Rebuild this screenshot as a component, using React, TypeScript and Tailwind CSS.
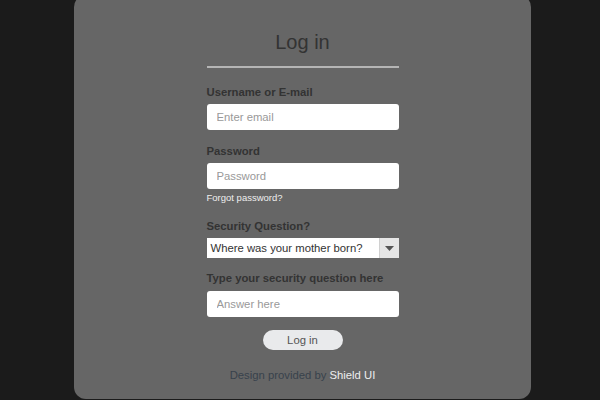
import React from "react";

const font = { fontFamily: '"Liberation Sans", Arial, sans-serif' };

function Label({ children, className = "" }: { children: React.ReactNode; className?: string }) {
  return (
    <div className={`text-[11.3px] leading-[13px] font-bold text-[#333] ${className}`}>{children}</div>
  );
}

function TextInput({ placeholder, type = "text" }: { placeholder: string; type?: string }) {
  return (
    <input
      type={type}
      placeholder={placeholder}
      className="block h-[26px] w-full rounded-[3px] bg-white px-[10px] text-[11.3px] text-[#333] outline-none placeholder:text-[#999]"
    />
  );
}

export default function App() {
  return (
    <div className="h-[400px] w-[600px] overflow-hidden bg-[#1b1b1b]" style={font}>
      <div className="-mt-[5px] ml-[74px] h-[404px] w-[457px] rounded-[12px] bg-[#666666] pt-[35px]">
        <div className="mx-auto flex w-[192px] flex-col">
          <h1 className="text-center text-[20px] leading-6 text-[#333]">Log in</h1>
          <div className="mt-3 h-[2px] bg-[#b5b5b5]" />

          <Label className="mt-[18px] mb-[5px]">Username or E-mail</Label>
          <TextInput placeholder="Enter email" />

          <Label className="mt-[15px] mb-[5px]">Password</Label>
          <TextInput placeholder="Password" type="password" />
          <a className="mt-[3px] text-[9.5px] leading-3 text-[#eeeeee]">Forgot password?</a>

          <Label className="mt-4 mb-[5px]">Security Question?</Label>
          <div className="flex h-5 w-full bg-white">
            <div className="flex flex-1 items-center pl-1 text-[11.3px] text-[#333]">
              Where was your mother born?
            </div>
            <div className="flex w-5 items-center justify-center border-l border-[#d0d0d0] bg-[#e6e6e6]">
              <svg width="9" height="5" viewBox="0 0 9 5">
                <path d="M0 0h9L4.5 5z" fill="#555" />
              </svg>
            </div>
          </div>

          <Label className="mt-[14px] mb-[6px]">Type your security question here</Label>
          <TextInput placeholder="Answer here" />

          <button className="mx-auto mt-[13px] h-5 w-20 rounded-full bg-[#e9eaec] text-[11.3px] leading-5 text-[#555]">
            Log in
          </button>

          <div className="mt-[18px] text-center text-[11.3px] leading-[14px] text-[#38424c]">
            Design provided by <span className="text-[#eeeeee]">Shield UI</span>
          </div>
        </div>
      </div>
    </div>
  );
}
